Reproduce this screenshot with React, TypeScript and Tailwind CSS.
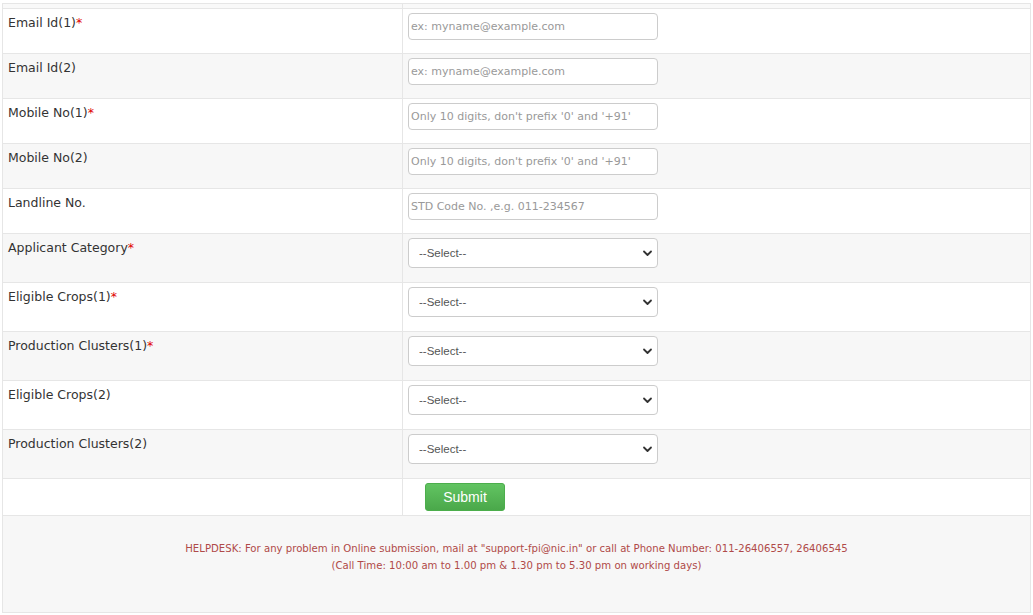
import React from 'react';

type Row = {
  label: string;
  required?: boolean;
  kind: 'input' | 'select';
  placeholder?: string;
};

const rows: Row[] = [
  { label: 'Email Id(1)', required: true, kind: 'input', placeholder: 'ex: myname@example.com' },
  { label: 'Email Id(2)', kind: 'input', placeholder: 'ex: myname@example.com' },
  { label: 'Mobile No(1)', required: true, kind: 'input', placeholder: "Only 10 digits, don't prefix '0' and '+91'" },
  { label: 'Mobile No(2)', kind: 'input', placeholder: "Only 10 digits, don't prefix '0' and '+91'" },
  { label: 'Landline No.', kind: 'input', placeholder: 'STD Code No. ,e.g. 011-234567' },
  { label: 'Applicant Category', required: true, kind: 'select' },
  { label: 'Eligible Crops(1)', required: true, kind: 'select' },
  { label: 'Production Clusters(1)', required: true, kind: 'select' },
  { label: 'Eligible Crops(2)', kind: 'select' },
  { label: 'Production Clusters(2)', kind: 'select' },
];

const SelectBox = () => (
  <div className="relative w-[250px]">
    <select
      defaultValue=""
      className="h-[30px] w-full appearance-none rounded-[4px] border border-[#cccccc] bg-white pl-[10px] pr-8 pt-[1px] text-[11.5px] text-[#555555] outline-none"
      style={{ fontFamily: '"Liberation Sans", Arial, sans-serif' }}
    >
      <option value="">--Select--</option>
    </select>
    <svg
      className="pointer-events-none absolute right-[5px] top-[11px]"
      width="11"
      height="9"
      viewBox="0 0 11 9"
      fill="none"
    >
      <path d="M2 2.5 L5.5 6 L9 2.5" stroke="#333333" strokeWidth="1.8" strokeLinecap="round" strokeLinejoin="round" />
    </svg>
  </div>
);

export default function App() {
  return (
    <div
      className="min-h-[615px] bg-white px-[2px] pt-[3px] text-[#333333]"
      style={{ fontFamily: '"DejaVu Sans", Verdana, sans-serif' }}
    >
      <table className="w-[1029px] border-collapse border border-[#dddddd]">
        <tbody>
          {/* partial header row cut off at the top */}
          <tr className="h-[5px] bg-[#f9f9f9]">
            <td className="w-[400px] border border-[#e6e6e6] p-0"></td>
            <td className="border border-[#e6e6e6] p-0"></td>
          </tr>

          {rows.map((row, i) => (
            <tr
              key={row.label}
              className={`${i % 2 === 0 ? 'bg-white' : 'bg-[#f7f7f7]'} ${row.kind === 'input' ? 'h-[45px]' : 'h-[49px]'}`}
            >
              <td className="w-[400px] border border-[#e6e6e6] px-[5px] pt-[5px] align-top text-[12.5px] leading-[17px]">
                {row.label}
                {row.required && <span className="text-[#e00000]">*</span>}
              </td>
              <td className="border border-[#e6e6e6] px-[5px] pt-[4px] align-top">
                {row.kind === 'input' ? (
                  <input
                    type="text"
                    placeholder={row.placeholder}
                    className="h-[27px] w-[250px] rounded-[4px] border border-[#cccccc] bg-white px-[2px] text-[11px] text-[#555555] outline-none placeholder:text-[#999999]"
                    style={{ fontFamily: '"DejaVu Sans", Verdana, sans-serif' }}
                  />
                ) : (
                  <SelectBox />
                )}
              </td>
            </tr>
          ))}

          <tr className="h-[37px] bg-white">
            <td className="w-[400px] border border-[#e6e6e6]"></td>
            <td className="border border-[#e6e6e6] pl-[22px] align-middle">
              <button
                type="button"
                className="h-[28px] w-[80px] rounded-[3px] border border-[#4cae4c] bg-gradient-to-b from-[#62c462] to-[#4aa84a] text-[14px] text-white"
                style={{ fontFamily: '"Liberation Sans", Arial, sans-serif' }}
              >
                Submit
              </button>
            </td>
          </tr>

          <tr className="h-[97px] bg-[#f7f7f7]">
            <td colSpan={2} className="border border-[#e6e6e6] pt-[24px] align-top text-center text-[10.15px] leading-[17px] text-[#b04a48]">
              <div>
                HELPDESK: For any problem in Online submission, mail at "support-fpi@nic.in" or call at Phone Number: 011-26406557, 26406545
              </div>
              <div>(Call Time: 10:00 am to 1.00 pm &amp; 1.30 pm to 5.30 pm on working days)</div>
            </td>
          </tr>
        </tbody>
      </table>
    </div>
  );
}
